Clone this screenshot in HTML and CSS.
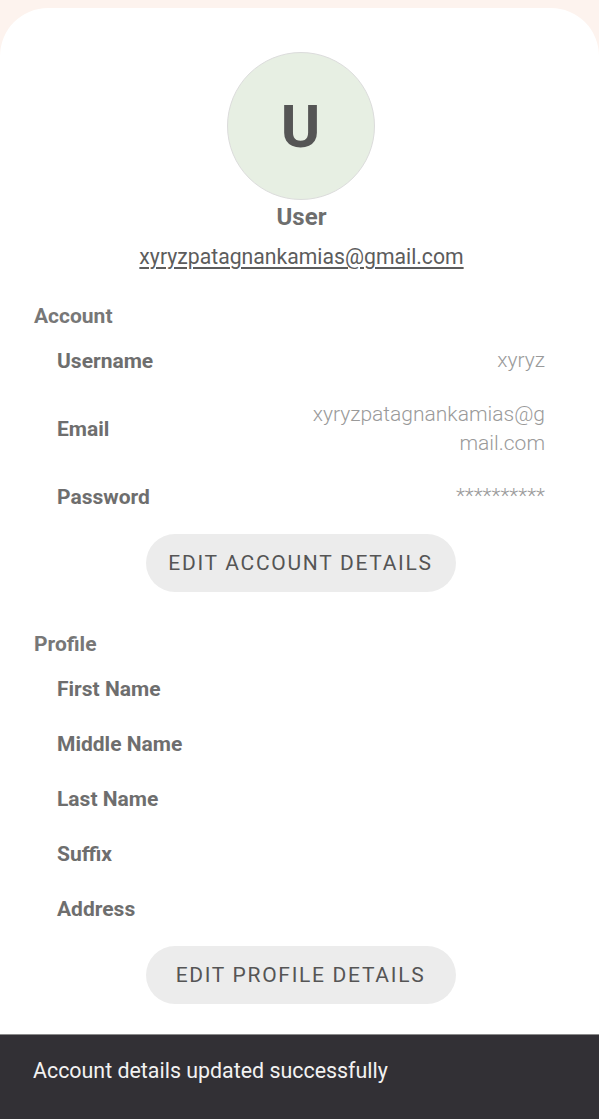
FILE: index.html
```html
<!DOCTYPE html>
<html>
<head>
<meta charset="utf-8">
<link rel="stylesheet" href="styles.css">
</head>
<body>
<div class="card">
  <div class="header">
    <div class="avatar">U</div>
    <div class="name">User</div>
    <div class="mail">xyryzpatagnankamias@gmail.com</div>
  </div>

  <div class="section">
    <div class="section-title">Account</div>
    <div class="row"><span class="label">Username</span><span class="value">xyryz</span></div>
    <div class="row row-tall"><span class="label">Email</span><span class="value">xyryzpatagnankamias@g<br>mail.com</span></div>
    <div class="row"><span class="label">Password</span><span class="value">**********</span></div>
    <div class="btn-wrap"><button class="btn">EDIT ACCOUNT DETAILS</button></div>
  </div>

  <div class="section section-profile">
    <div class="section-title">Profile</div>
    <div class="row"><span class="label">First Name</span></div>
    <div class="row"><span class="label">Middle Name</span></div>
    <div class="row"><span class="label">Last Name</span></div>
    <div class="row"><span class="label">Suffix</span></div>
    <div class="row"><span class="label">Address</span></div>
    <div class="btn-wrap"><button class="btn">EDIT PROFILE DETAILS</button></div>
  </div>
</div>
<div class="snackbar">Account details updated successfully</div>
</body>
</html>
```

FILE: styles.css
```css
html, body {
  margin: 0;
  padding: 0;
  background: #fdf3ee;
  font-family: Roboto, "Noto Sans", sans-serif;
}
body {
  padding-top: 8px;
  height: 1111px;
  overflow: hidden;
}
.card {
  background: #ffffff;
  border-radius: 48px 48px 0 0;
  height: 1111px;
  box-sizing: border-box;
  padding-top: 44px;
}
.header {
  display: flex;
  flex-direction: column;
  align-items: center;
}
.avatar {
  width: 146px;
  height: 146px;
  border-radius: 50%;
  background: #e7efe3;
  border: 1px solid #dcdcdc;
  display: flex;
  align-items: center;
  justify-content: center;
  font-size: 60px;
  font-weight: 700;
  color: #555555;
  margin-left: 2px;
}
.name {
  margin-top: 3px;
  font-size: 24px;
  font-weight: 700;
  color: #6e6e6e;
  line-height: 28px;
  margin-left: 4px;
}
.mail {
  margin-top: 13px;
  font-size: 21.2px;
  color: #5c5c5c;
  text-decoration: underline;
  text-underline-offset: 3px;
  line-height: 25px;
  margin-left: 4px;
}
.section {
  padding: 0 54px 0 34px;
  margin-top: 35px;
}
.section-title {
  font-size: 21px;
  font-weight: 700;
  color: #777777;
  line-height: 24px;
  margin-bottom: 5px;
}
.row {
  display: flex;
  justify-content: space-between;
  align-items: center;
  padding-left: 23px;
  min-height: 55px;
}
.row-tall {
  min-height: 81px;
}
.label {
  font-size: 21px;
  font-weight: 700;
  color: #6e6e6e;
}
.value {
  font-size: 21px;
  font-weight: 300;
  color: #9a9a9a;
  text-align: right;
  line-height: 29px;
}
.btn-wrap {
  display: flex;
  justify-content: center;
  padding-left: 22px;
  margin-top: 10px;
}
.btn {
  width: 310px;
  height: 58px;
  border: none;
  border-radius: 29px;
  background: #ececec;
  font-family: Roboto, sans-serif;
  font-size: 21px;
  letter-spacing: 1.7px;
  color: #555555;
  padding: 0;
}
.section-profile {
  margin-top: 40px;
}
.snackbar {
  position: fixed;
  left: 0;
  right: 0;
  bottom: 0;
  height: 85px;
  background: #323035;
  color: #f2f2f2;
  font-size: 21.4px;
  padding: 23px 33px 0;
  box-sizing: border-box;
  border-top: 1px solid #8a8a8a;
}
```
